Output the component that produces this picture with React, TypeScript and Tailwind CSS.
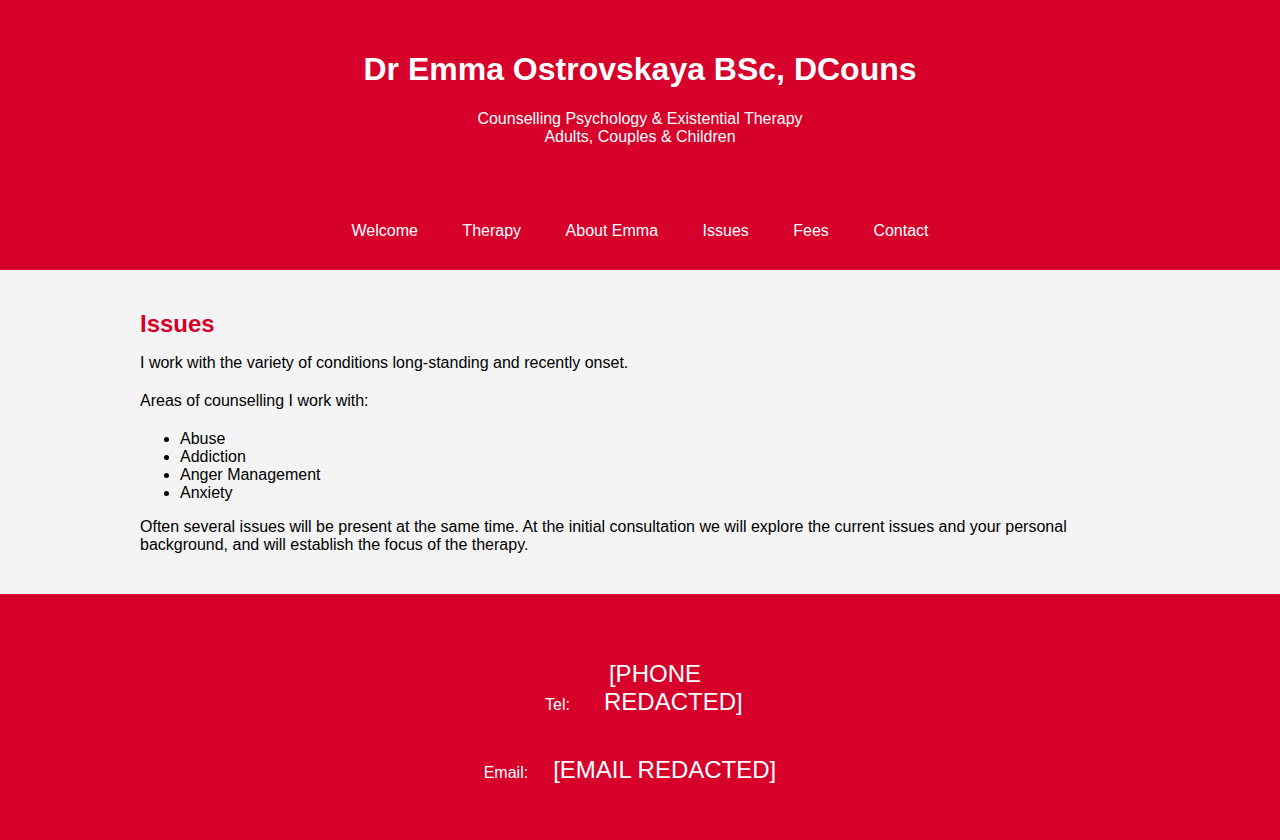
export default function App() {
  const nav = ["Welcome", "Therapy", "About Emma", "Issues", "Fees", "Contact"];
  return (
    <div className="min-h-[840px] bg-[#f4f4f4] font-['Liberation_Sans',Arial,sans-serif] text-black">
      <header className="bg-[#d7002b] text-white text-center pt-[51px] pb-[30px]">
        <h1 className="text-[32px] font-bold leading-[37px]">Dr Emma Ostrovskaya BSc, DCouns</h1>
        <div className="mt-[22px] text-[16px] leading-[18px]">
          <div>Counselling Psychology &amp; Existential Therapy</div>
          <div>Adults, Couples &amp; Children</div>
        </div>
        <nav className="mt-[76px] flex justify-center gap-[44.5px] text-[16px] leading-[18px]">
          {nav.map((n) => (
            <a key={n} className="text-white">{n}</a>
          ))}
        </nav>
      </header>
      <main className="w-[1000px] mx-auto pt-[40px] pb-[40px] text-[16px] leading-[18px]">
        <h2 className="text-[24px] font-bold leading-[28px] text-[#d7002b]">Issues</h2>
        <p className="mt-[16px]">I work with the variety of conditions long-standing and recently onset.</p>
        <p className="mt-[20px]">Areas of counselling I work with:</p>
        <ul className="mt-[20px] list-disc pl-[40px]">
          <li>Abuse</li>
          <li>Addiction</li>
          <li>Anger Management</li>
          <li>Anxiety</li>
        </ul>
        <p className="mt-[16px]">
          Often several issues will be present at the same time. At the initial consultation we will explore the current issues and your personal background, and will establish the focus of the therapy.
        </p>
      </main>
      <footer className="bg-[#d7002b] text-white text-center pt-[66px] h-[246px]">
        <div className="pl-[8px] text-[16px] leading-[28px]">
          <span>Tel:</span>
          <span className="inline-block ml-[34px] w-[139px] text-[24px] leading-[28px] text-left indent-[5px]">[PHONE REDACTED]</span>
        </div>
        <div className="mt-[37px] pr-[20px] text-[16px] leading-[28px]">
          <span>Email:</span>
          <span className="inline-block ml-[25px] text-[24px] leading-[28px]">[EMAIL REDACTED]</span>
        </div>
      </footer>
    </div>
  );
}
